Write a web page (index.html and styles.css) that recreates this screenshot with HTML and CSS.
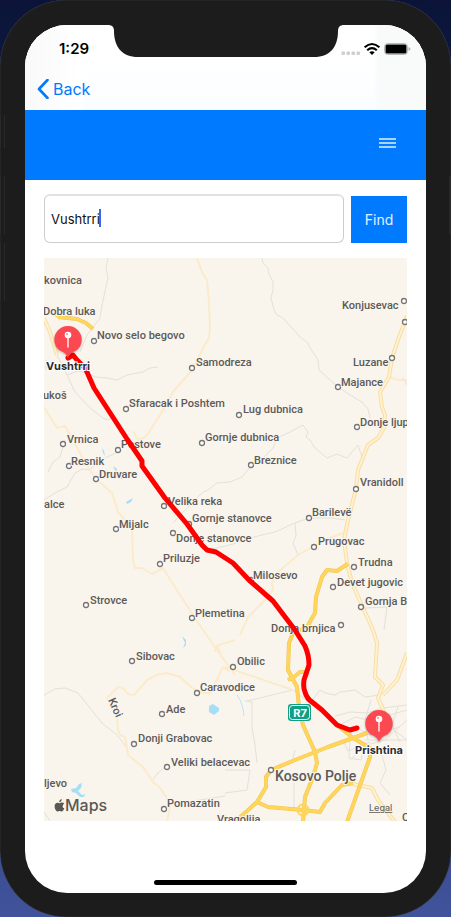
FILE: index.html
```
<!DOCTYPE html>
<html lang="en">
<head>
<meta charset="utf-8">
<meta name="viewport" content="width=device-width, initial-scale=1">
<title>Route finder</title>
<link rel="stylesheet" href="styles.css">
</head>
<body>
<div class="phone">
  <span class="side-key side-key-mute"></span>
  <span class="side-key side-key-up"></span>
  <span class="side-key side-key-down"></span>
  <span class="side-key side-key-power"></span>
  <div class="screen">
    <header class="top">
      <div class="status">
        <span class="time">1:29</span>
        <svg class="notch" viewBox="0 0 236 32" aria-hidden="true"><path d="M0 0C4 0 6 2 6 6C6 22 14 32 30 32H206C222 32 230 22 230 6C230 2 232 0 236 0Z" fill="#1c1c1c"/></svg>
        <svg class="status-icons" viewBox="0 0 70 14" aria-hidden="true">
          <g fill="#cfcfcf"><rect x="0.500" y="9.500" width="3.500" height="3.500" rx="1"/><rect x="5.500" y="9.500" width="3.500" height="3.500" rx="1"/><rect x="10.500" y="9.500" width="3.500" height="3.500" rx="1"/><rect x="15.500" y="9.500" width="3.500" height="3.500" rx="1"/></g>
          <g fill="none" stroke="#000" stroke-width="2.1"><path d="M23.6 5.3Q31 -1.3 38.400 5.300"/><path d="M26.200 8.300Q31 4 35.800 8.300"/></g>
          <path d="M28.300 10.200Q31 8.200 33.700 10.200L31 13Z"/>
          <rect x="43.500" y="1.500" width="23" height="11" rx="3" fill="#fff" stroke="#b9b9b9"/>
          <rect x="44.500" y="2.500" width="21" height="9" rx="1.500"/>
          <path d="M67.500 5Q69.500 6 69.500 7T67.500 9Z" fill="#b0b0b0"/>
        </svg>
      </div>
      <nav class="nav">
        <a class="back" href="#">
          <svg class="chevron" viewBox="0 0 12 20" aria-hidden="true"><path d="M10.500 1L2 10L10.500 19" fill="none" stroke="#007aff" stroke-width="2.600" stroke-linecap="round" stroke-linejoin="round"/></svg>
          <span>Back</span>
        </a>
      </nav>
    </header>
    <div class="toolbar">
      <button class="menu" type="button" aria-label="Menu"><span></span><span></span><span></span></button>
    </div>
    <main class="content">
      <form class="search">
        <div class="field">
          <input class="query" type="text" value="Vushtrri" aria-label="Place">
          <span class="caret"></span>
        </div>
        <button class="find" type="button">Find</button>
      </form>
      <svg class="map" viewBox="44 258 363 563" role="img" aria-label="Route map">
        <rect x="44" y="258" width="363" height="563" fill="#f9f5ed"/>
        <g class="water">
          <path d="M209 706L213 704L219 708L219 711L214 715L209 712Z"/>
          <path d="M71 789L76 788L79 784L82 783L81 788L78 791L82 795L85 794L84 797L80 797L76 793L72 792Z"/>
          <path d="M102 448L104 451L105 456L103 453ZM113 466L117 469L116 472ZM117 470L123 480L120 478ZM126 502L133 498L131 502L127 504ZM182 636L186 640L186 645L183 648L185 643Z"/>
          <path class="stream" d="M237 695Q243 703 244 716"/>
          <path class="stream" d="M46 360V370"/>
        </g>
        <g class="minor">
          <path d="M108 258L106 268L108 278L102 305L100 318L87 335L80 352"/>
          <path d="M57 355L67 375L78 371L87 373L95 377L107 378L117 380L127 375L143 372L150 368L158 367"/>
          <path d="M67 375L75 392L90 408L103 418L108 420L113 417"/>
          <path d="M65 440L60 457L53 462L48 472M44 500L55 493L67 487L75 473L82 469L90 470L98 462L107 457L118 452"/>
          <path d="M173 523L183 512L203 492L208 490L217 483L230 482L242 477L252 465L262 459L273 448L277 438L290 432L303 425L308 432L306 437L310 440L315 448L327 458L337 454L347 458L352 452L358 445L362 457"/>
          <path d="M262 258L263 263L268 268L269 274L273 282L273 290L271 298L274 310L277 315L283 318L300 337L308 343L310 348L318 360L319 370L329 379L338 387L350 395L362 402L368 409L370 418"/>
          <path d="M207 550L230 545L250 538L262 535L275 532L295 523L309 518L330 518L345 520M295 523L296 536L293 543L298 555"/>
          <path d="M44 695L55 689L65 688L78 693L90 708L102 723L117 735L127 748M167 765L157 774L152 781"/>
          <path d="M245 701L252 702V727L255 745L257 763M247 701L272 695L293 690L310 703L320 690L325 693L335 695L340 692L355 690L365 697L380 695"/>
          <path d="M225 793L247 790L250 770L225 770M180 803L200 800L225 796M295 750L292 763M294 783V809M44 812L50 821M403 378L407 385M365 608L387 607L384 630"/>
          <path d="M335 716L350 712L367 713L382 708L407 705M340 725L355 717L368 720L390 715L407 710M357 728L370 735L400 727M350 760L367 745L385 740L407 720M350 738L349 758L361 760L365 742M371 700L365 720L368 740M389 713L394 730L407 740M365 740H407M382 755L386 770L380 783L390 795M398 707L392 725L400 742M344 742L348 751L370 742"/>
        </g>
        <g class="pale">
          <path d="M197 258L202 272L207 280L209 302L210 328L209 338L203 348L192 370L173 392L160 415L149 432L145 437L138 440L133 431"/>
          <path d="M44 407L57 428L65 426L73 440L82 457L95 478L112 493L118 512L132 528L133 560L135 568L142 568L152 574L163 568L178 592L203 630L217 650L235 675"/>
          <path d="M343 533L325 540L298 555L278 572L272 583L273 590L265 600L248 617L240 635M389 377L398 380H407"/>
          <path d="M107 698L118 687L123 688L128 694L134 695L147 680L157 675L167 673L180 677L192 688L203 693L210 693L223 667L230 672M214 652L219 645L235 640M216 645L221 654M225 667L293 690"/>
          <path d="M107 698L117 717L118 730L120 735L125 737L128 755L143 767L153 782L160 788L168 800L170 807L167 822"/>
        </g>
        <g class="roads-edge">
          <path d="M407 316L405 322L399 337L392 358L389 377L380 392L382 407L385 415L384 428L378 438L368 445L358 470L356 489L348 520L344 540L347 563L352 583L373 630L377 643L375 677L383 685L378 698L384 712M383 695L397 680L407 653"/>
          <path d="M44 318L50 332L57 355M353 784L372 788L378 800L395 822"/>
        </g>
        <g class="roads-core">
          <path d="M407 316L405 322L399 337L392 358L389 377L380 392L382 407L385 415L384 428L378 438L368 445L358 470L356 489L348 520L344 540L347 563L352 583L373 630L377 643L375 677L383 685L378 698L384 712M383 695L397 680L407 653"/>
          <path d="M44 318L50 332L57 355M353 784L372 788L378 800L395 822"/>
        </g>
        <g class="highway-edge">
          <path d="M58 317L77 319L86 323L93 329"/>
          <path d="M348 564L343 567L337 571L327 570L322 577L316 597L315 613L307 627L293 633L289 643L288 670L297 687L299 707L303 725L315 752L317 763L313 777L305 797L303 822"/>
          <path d="M288 680L294 677L300 672L307 672M271 770L295 760L328 747L353 738L367 733M337 725L353 738L370 748V757L347 822M271 770L266 777V787L257 802L236 821M257 802L268 807L303 810L320 812L325 803L342 785L353 783"/>
        </g>
        <g class="highway">
          <path class="narrow" d="M44 306L51 313L58 317"/>
          <path d="M58 317L77 319L86 323L93 329"/>
          <path d="M348 564L343 567L337 571L327 570L322 577L316 597L315 613L307 627L293 633L289 643L288 670L297 687L299 707L303 725L315 752L317 763L313 777L305 797L303 822"/>
          <path d="M288 680L294 677L300 672L307 672M271 770L295 760L328 747L353 738L367 733M337 725L353 738L370 748V757L347 822M271 770L266 777V787L257 802L236 821M257 802L268 807L303 810L320 812L325 803L342 785L353 783"/>
          <circle class="narrow" cx="303" cy="810" r="5.500"/>
        </g>
        <g class="dots">
          <circle cx="94" cy="341" r="2.500"/><circle cx="192" cy="368" r="2.500"/><circle cx="126" cy="409" r="2.500"/><circle cx="63" cy="444" r="2.500"/><circle cx="202" cy="443" r="2.500"/><circle cx="118" cy="450" r="2.500"/><circle cx="69" cy="466" r="2.500"/><circle cx="96" cy="479" r="2.500"/><circle cx="164" cy="506" r="2.500"/><circle cx="189" cy="524" r="2.500"/><circle cx="116" cy="529" r="2.500"/><circle cx="173" cy="533" r="2.500"/><circle cx="160" cy="564" r="2.500"/><circle cx="86" cy="605" r="2.500"/><circle cx="192" cy="618" r="2.500"/><circle cx="404" cy="301" r="2.500"/><circle cx="405" cy="322" r="2.500"/><circle cx="392" cy="358" r="2.500"/><circle cx="338" cy="387" r="2.500"/><circle cx="239" cy="415" r="2.500"/><circle cx="357" cy="427" r="2.500"/><circle cx="251" cy="465" r="2.500"/><circle cx="356" cy="489" r="2.500"/><circle cx="309" cy="518" r="2.500"/><circle cx="314" cy="547" r="2.500"/><circle cx="354" cy="567" r="2.500"/><circle cx="251" cy="580" r="2.500"/><circle cx="333" cy="587" r="2.500"/><circle cx="361" cy="607" r="2.500"/><circle cx="341" cy="625" r="2.500"/><circle cx="132" cy="661" r="2.500"/><circle cx="197" cy="693" r="2.500"/><circle cx="162" cy="714" r="2.500"/><circle cx="134" cy="744" r="2.500"/><circle cx="167" cy="767" r="2.500"/><circle cx="164" cy="809" r="2.500"/><circle cx="233" cy="667" r="2.500"/><circle cx="271" cy="770" r="2.500"/>
        </g>
        <g class="place">
          <text x="44" y="284">kovnica</text>
          <text x="43" y="315">Dobra luka</text>
          <text x="97" y="339">Novo selo begovo</text>
          <text x="342" y="309">Konjusevac</text>
          <text x="196" y="366">Samodreza</text>
          <text x="353" y="366">Luzane</text>
          <text x="341" y="386">Majance</text>
          <text x="43" y="399">ukoš</text>
          <text x="129" y="407">Sfaracak i Poshtem</text>
          <text x="243" y="413">Lug dubnica</text>
          <text x="360" y="426">Donje ljup</text>
          <text x="67" y="443">Vrnica</text>
          <text x="205" y="441">Gornje dubnica</text>
          <text x="121" y="448">Postove</text>
          <text x="71" y="465">Resnik</text>
          <text x="254" y="464">Breznice</text>
          <text x="99" y="478">Druvare</text>
          <text x="360" y="486">Vranidoll</text>
          <text x="44" y="508">alce</text>
          <text x="168" y="505">Velika reka</text>
          <text x="312" y="516">Barilevë</text>
          <text x="192" y="522">Gornje stanovce</text>
          <text x="119" y="528">Mijalc</text>
          <text x="176" y="542">Donje stanovce</text>
          <text x="318" y="545">Prugovac</text>
          <text x="163" y="562">Priluzje</text>
          <text x="358" y="566">Trudna</text>
          <text x="253" y="579">Milosevo</text>
          <text x="337" y="586">Devet jugovic</text>
          <text x="90" y="604">Strovce</text>
          <text x="365" y="605">Gornja B</text>
          <text x="195" y="617">Plemetina</text>
          <text x="271" y="632">Donja brnjica</text>
          <text x="136" y="660">Sibovac</text>
          <text x="237" y="665">Obilic</text>
          <text x="200" y="691">Caravodice</text>
          <text x="166" y="713">Ade</text>
          <text x="138" y="742">Donji Grabovac</text>
          <text x="171" y="766">Veliki belacevac</text>
          <text x="44" y="787">ljevo</text>
          <text x="167" y="807">Pomazatin</text>
          <text x="217" y="823">Vragolija</text>
          <text x="402" y="821">C</text>
          <text transform="translate(108 700) rotate(66)">Kroi</text>
        </g>
        <text class="town" x="275" y="781">Kosovo Polje</text>
        <g class="shield">
          <rect x="288" y="704" width="23" height="17" rx="3" fill="#0e9f84"/>
          <rect x="289.500" y="705.500" width="20" height="14" rx="3" fill="#0e9f84" stroke="#fff"/>
          <text x="300" y="717" text-anchor="middle">R7</text>
        </g>
        <path class="route" d="M68 358L73 355L77 360L85 368L87 372L94 388L127 439L142 461L142 466L165 498L187 524L202 545L207 550L216 552L233 563L249 580L273 601L295 630L305 646Q309 655 309 665L304 680Q303 688 305 692Q307 699 312 702L322 710L337 725L342 727L350 730L357 728"/>
        <g class="pin">
          <path d="M68 358C66 353 63 352 59 350A13.700 13.700 0 1 1 77 350C73 352 70 353 68 358Z" fill="#fc4850"/>
          <path d="M68 335V347" stroke="#ffe4e4" stroke-width="1.600" stroke-linecap="round"/>
          <circle cx="68" cy="335" r="3.300" fill="#fff"/><circle cx="67" cy="334" r="1" fill="#fc8a8f"/>
        </g>
        <g class="pin" transform="translate(311 384)">
          <path d="M68 358C66 353 63 352 59 350A13.700 13.700 0 1 1 77 350C73 352 70 353 68 358Z" fill="#fc4850"/>
          <path d="M68 335V347" stroke="#ffe4e4" stroke-width="1.600" stroke-linecap="round"/>
          <circle cx="68" cy="335" r="3.300" fill="#fff"/><circle cx="67" cy="334" r="1" fill="#fc8a8f"/>
        </g>
        <text class="endpoint" x="68" y="370" text-anchor="middle">Vushtrri</text>
        <text class="endpoint" x="379" y="754" text-anchor="middle">Prishtina</text>
        <g fill="#5a5855">
          <path d="M61.700 799C61.900 800.500 60.800 802.200 59.200 802.300C59 800.700 60.200 799.300 61.700 799ZM64 809C63.300 810.500 62.700 811.400 61.700 811.400C60.900 811.400 60.500 810.900 59.600 810.900C58.700 810.900 58.300 811.400 57.500 811.400C56 811.400 54.600 808.600 54.600 806.300C54.600 804 56 802.700 57.500 802.700C58.400 802.700 59 803.300 59.700 803.300C60.400 803.300 61 802.600 62.200 802.600C62.900 802.600 63.700 803 64.200 803.700C62 805 62.200 808 64.400 808.300Z"/>
          <text class="brand" x="65" y="811">Maps</text>
        </g>
        <a href="#"><text class="legal" x="369" y="811">Legal</text></a>
      </svg>
    </main>
    <div class="home"></div>
  </div>
</div>
</body>
</html>
```
FILE: styles.css
```
* {
  box-sizing: border-box;
}

body {
  margin: 0;
  min-height: 100vh;
  background: linear-gradient(#0b1438, #1c2a68 50%, #40539b);
  font-family: Inter, "Liberation Sans", sans-serif;
}

.phone {
  position: relative;
  display: flex;
  min-height: 100vh;
  padding: 25px 25px 24px;
  border-radius: 66px;
  background: #1c1c1c;
  box-shadow: inset 0 0 1px #6b6e7c;
}

.side-key {
  position: absolute;
  left: 0;
  width: 5px;
  border: 1px solid #292929;
  border-width: 0 1px;
}

.side-key-mute {
  top: 115px;
  height: 33px;
}

.side-key-up {
  top: 176px;
  height: 58px;
}

.side-key-down {
  top: 243px;
  height: 58px;
}

.side-key-power {
  right: 0;
  left: auto;
  width: 2px;
  top: 176px;
  height: 58px;
}

.screen {
  display: flex;
  flex: 1;
  flex-direction: column;
  overflow: hidden;
  border-radius: 42px;
  background: #fff;
}

.top {
  background: linear-gradient(90deg, #f9f9fa, #fff 14%, transparent 15%, transparent 87%, #f9fbfb 88%, #f9fafa), linear-gradient(#fff 40%, #fafdff);
}

.status {
  display: grid;
  grid-template-columns: 1fr 236px 1fr;
  height: 44px;
}

.time {
  padding: 14px 0 0 34px;
  font-size: 15px;
  font-weight: 600;
  line-height: 20px;
}

.notch {
  display: block;
  width: 236px;
  height: 32px;
}

.status-icons {
  width: 70px;
  height: 14px;
  margin-top: 17px;
  margin-left: -3px;
}

.nav {
  display: flex;
  height: 41px;
  padding: 0 12px 2px;
}

.back {
  display: flex;
  align-items: center;
  gap: 4px;
  color: #007aff;
  font-size: 16px;
  text-decoration: none;
}

.chevron {
  width: 12px;
  height: 20px;
}

.toolbar {
  display: flex;
  align-items: center;
  justify-content: flex-end;
  height: 70px;
  padding: 0 30px 4px;
  background: #007aff;
}

.menu {
  display: flex;
  flex-direction: column;
  gap: 2px;
  width: 17px;
  padding: 0;
  border: 0;
  background: none;
}

.menu span {
  height: 2px;
  background: #a9d2ff;
}

.content {
  display: flex;
  flex-direction: column;
  gap: 15px;
  padding: 14px 19px 0;
}

.search {
  display: flex;
  align-items: flex-end;
  gap: 7px;
}

.field {
  position: relative;
  flex: 1;
}

.query {
  display: block;
  width: 100%;
  height: 49px;
  padding: 0 6px;
  border: 1px solid #cdcdcd;
  border-top: 2px solid #e2e2e2;
  border-radius: 6px;
  outline: 0;
  background: #fff;
  color: #111;
  font: 13px Inter, "Liberation Sans", sans-serif;
}

.caret {
  position: absolute;
  top: 15px;
  left: 55px;
  width: 2px;
  height: 18px;
  background: #3c66f0;
}

.find {
  width: 56px;
  height: 47px;
  padding: 0;
  border: 0;
  background: #007aff;
  color: #e4f1ff;
  font: 14px Inter, "Liberation Sans", sans-serif;
}

.map {
  display: block;
  width: 100%;
  height: auto;
  overflow: hidden;
}

.map path {
  stroke-linejoin: round;
}

.water {
  fill: #a5dff5;
}

.stream {
  fill: none;
  stroke: #b9e6f6;
}

.minor {
  fill: none;
  stroke: #e4e0da;
}

.pale {
  fill: none;
  stroke: #fcebcb;
  stroke-width: 2;
}

.roads-edge {
  fill: none;
  stroke: #f8dda5;
  stroke-width: 4;
}

.roads-core {
  fill: none;
  stroke: #fff2cf;
  stroke-width: 2;
}

.highway-edge {
  fill: none;
  stroke: #f0c45a;
  stroke-width: 4;
}

.highway {
  fill: none;
  stroke: #ffd659;
  stroke-width: 3;
}

.narrow {
  stroke-width: 2;
}

.dots {
  fill: #fff;
  stroke: #777573;
  stroke-width: 1.3;
}

.place,
.town,
.endpoint {
  fill: #5c5a58;
  stroke: #f9f5ed;
  stroke-width: 2;
  paint-order: stroke;
  font-family: Roboto, "Liberation Sans", sans-serif;
  font-size: 11px;
  font-weight: 500;
}

.town {
  font-size: 14px;
}

.endpoint {
  fill: #2c2c2e;
  stroke: #fff;
  font-family: Inter, "Liberation Sans", sans-serif;
  font-weight: 700;
}

.shield text {
  fill: #fff;
  font-size: 11px;
  font-weight: 700;
}

.route {
  fill: none;
  stroke: #f00;
  stroke-width: 5;
  stroke-linecap: round;
}

.pin {
  filter: drop-shadow(0 1px 1px #0004);
}

.brand {
  font-size: 16px;
  font-weight: 500;
}

.legal {
  fill: #6d6b68;
  font-size: 9px;
  font-weight: 500;
  text-decoration: underline;
}

.home {
  width: 143px;
  height: 5px;
  margin: auto auto 8px;
  border-radius: 3px;
  background: #000;
}
```
